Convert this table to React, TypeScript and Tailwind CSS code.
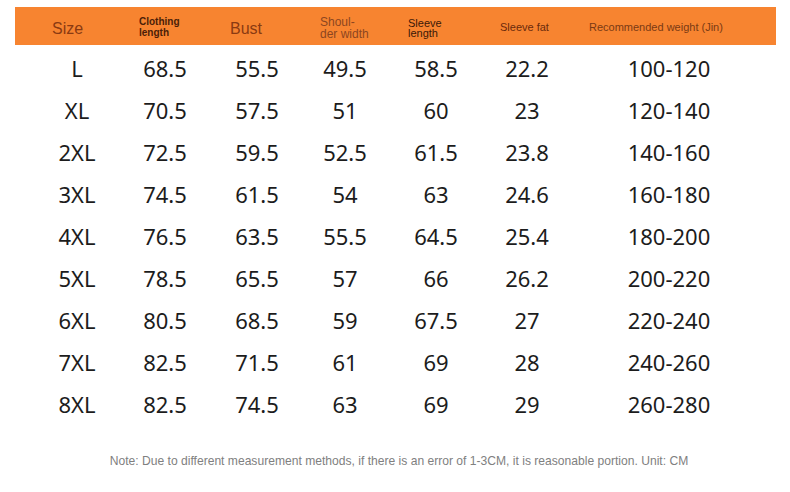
const rows = [
  ["L", "68.5", "55.5", "49.5", "58.5", "22.2", "100-120"],
  ["XL", "70.5", "57.5", "51", "60", "23", "120-140"],
  ["2XL", "72.5", "59.5", "52.5", "61.5", "23.8", "140-160"],
  ["3XL", "74.5", "61.5", "54", "63", "24.6", "160-180"],
  ["4XL", "76.5", "63.5", "55.5", "64.5", "25.4", "180-200"],
  ["5XL", "78.5", "65.5", "57", "66", "26.2", "200-220"],
  ["6XL", "80.5", "68.5", "59", "67.5", "27", "220-240"],
  ["7XL", "82.5", "71.5", "61", "69", "28", "240-260"],
  ["8XL", "82.5", "74.5", "63", "69", "29", "260-280"],
];

const cols = "grid grid-cols-[88px_88px_96px_80px_102px_80px_204px]";

export default function App() {
  return (
    <div className="w-[790px] h-[492px] bg-white pt-[7px] font-['Liberation_Sans',Arial,sans-serif]">
      {/* Header bar */}
      <div className="mx-[15px] w-[761px] h-[38px] bg-[#f78430] pl-[18px]">
        <div className={`${cols} h-full items-center`}>
          <div className="pl-[19px] pt-[5px] text-[16px] leading-[18px] text-[#8a3a12]">Size</div>
          <div className="pl-[18px] pt-[2px] text-[10px] leading-[11px] font-semibold text-[#4a1e08]">
            Clothing
            <br />
            length
          </div>
          <div className="pl-[21px] pt-[5px] text-[16px] leading-[18px] text-[#8a3a12]">Bust</div>
          <div className="pl-[15px] pt-[3px] text-[12px] leading-[12px] text-[#8c4620]">
            Shoul-
            <br />
            der width
          </div>
          <div className="pl-[23px] pt-[4px] text-[11px] leading-[10px] text-[#3a1808]">
            Sleeve
            <br />
            length
          </div>
          <div className="pl-[13px] pt-[3px] text-[11px] leading-[13px] whitespace-nowrap text-[#6a2a0c]">
            Sleeve fat
          </div>
          <div className="pl-[22px] pt-[2px] text-[11px] leading-[13px] whitespace-nowrap text-[#7a3a14]">
            Recommended weight (Jin)
          </div>
        </div>
      </div>

      {/* Body rows */}
      <div className="mt-[2px] pl-[33px] font-['Noto_Sans',sans-serif] text-[22px] text-[#1c1c1c]">
        {rows.map((r) => (
          <div key={r[0]} className={`${cols} h-[42px] items-center text-center`}>
            {r.map((v, i) => (
              <div key={i}>{v}</div>
            ))}
          </div>
        ))}
      </div>

      <p className="mt-[27px] pl-[8px] text-center text-[12.1px] text-[#808080]">
        Note: Due to different measurement methods, if there is an error of 1-3CM, it is reasonable portion. Unit: CM
      </p>
    </div>
  );
}
